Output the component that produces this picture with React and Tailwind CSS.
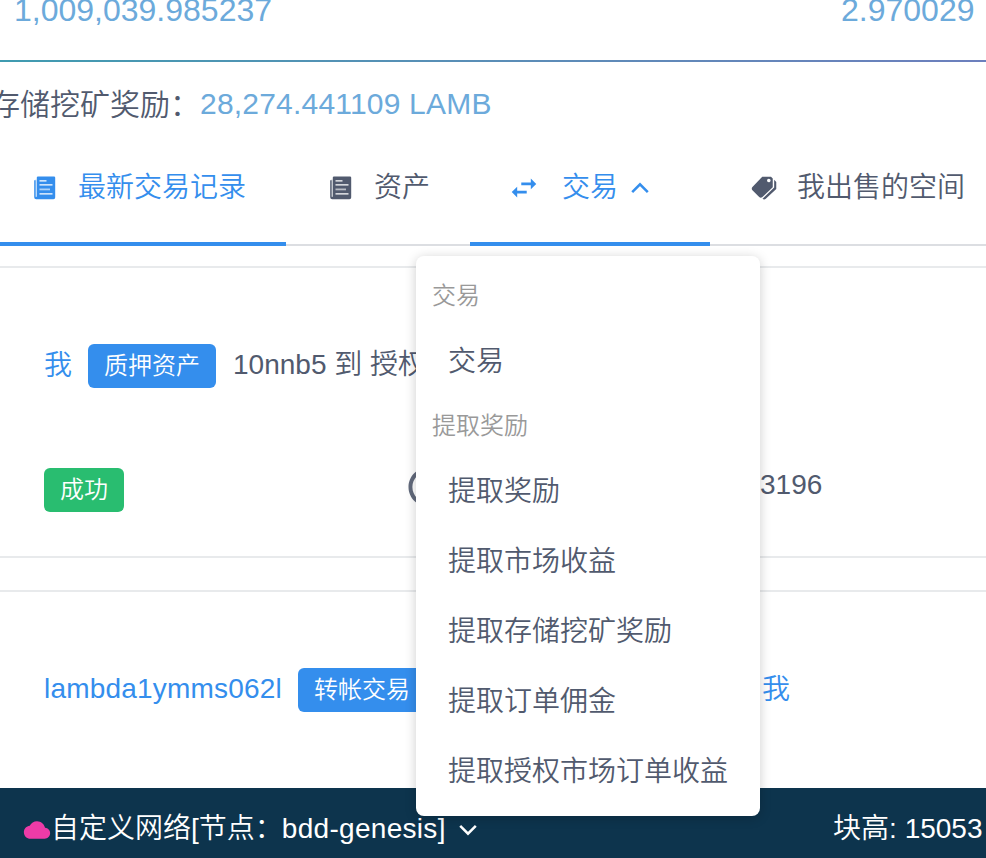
import React from 'react';
import { IoMdSwap, IoMdPricetags, IoMdCloud, IoMdTime } from 'react-icons/io';

function PaperIcon({ className }) {
  return (
    <svg viewBox="0 0 22 24" className={`h-6 w-[22px] ${className}`} fill="none">
      <path d="M0.2 4.2h1.4v16.6h1.2V1.6Q2.8 0.4 4 0.4h16Q21.2 0.4 21.2 1.6v19.8q0 1.8-1.8 1.8H2.2q-2 0-2-2z" fill="currentColor" />
      <path d="M1.9 3.6v17" stroke="currentColor" strokeOpacity="0.4" strokeWidth="1" />
      <path d="M5.5 4.9h7M5.5 8.9h13M5.5 17.9h13" stroke="white" strokeWidth="1.1" />
      <path d="M5.5 13.4h10.5" stroke="white" strokeOpacity="0.6" strokeWidth="1.8" />
    </svg>
  );
}

function Chevron({ className }) {
  return (
    <svg viewBox="0 0 18 12" className={`h-3 w-[18px] ${className}`} fill="none">
      <path d="M1.2 10.2L9 2.3l7.8 7.9" stroke="currentColor" strokeWidth="2.5" />
    </svg>
  );
}

function Tab({ icon, label, active, className, children }) {
  return (
    <div
      className={`flex h-[100px] shrink-0 items-center whitespace-nowrap ${
        active ? 'border-b-4 border-[#348eed] pb-[13px] text-[#348eed]' : 'border-b-2 border-[#dcdee2] pb-[15px]'
      } ${className}`}
    >
      {icon}
      <span className="pt-px leading-[40px]">{label}</span>
      {children}
    </div>
  );
}

function Badge({ color, children }) {
  return (
    <span className={`h-[44px] shrink-0 rounded-[6px] px-4 text-[24px] leading-[44px] text-white ${color}`}>
      {children}
    </span>
  );
}

function MenuTitle({ children }) {
  return <div className="h-[60px] px-4 text-[24px] leading-[60px] text-[#999999]">{children}</div>;
}

function MenuItem({ children }) {
  return <div className="h-[70px] px-8 leading-[72px]">{children}</div>;
}

function Dropdown() {
  return (
    <div className="absolute left-[416px] top-[256px] h-[560px] w-[344px] rounded-[8px] bg-white py-[10px] shadow-[0_2px_12px_rgba(0,0,0,0.2)]">
      <MenuTitle>交易</MenuTitle>
      <MenuItem>交易</MenuItem>
      <MenuTitle>提取奖励</MenuTitle>
      <MenuItem>提取奖励</MenuItem>
      <MenuItem>提取市场收益</MenuItem>
      <MenuItem>提取存储挖矿奖励</MenuItem>
      <MenuItem>提取订单佣金</MenuItem>
      <MenuItem>提取授权市场订单收益</MenuItem>
    </div>
  );
}

export default function App() {
  return (
    <div className="relative flex h-[858px] w-[986px] flex-col overflow-hidden whitespace-nowrap bg-white font-['Liberation_Sans','Noto_Sans_CJK_SC',sans-serif] text-[28px] font-[350] text-[#515a6e]">
      <div className="flex h-[60px] shrink-0 justify-between pl-[14px] pr-[11.5px] text-[32px] leading-[20px] text-[#6caadb]">
        <span>1,009,039.985237</span>
        <span>2.970029</span>
      </div>
      <div className="h-[2px] shrink-0 bg-linear-to-r from-[#3f9bb0] to-[#6c7fbd]" />

      <div className="-ml-[10px] flex h-[84px] shrink-0 items-center text-[30px] leading-[40px]">
        <span className="pt-px">存储挖矿奖励：</span>
        <span className="tracking-[0.2px] text-[#6caadb]">28,274.441109 LAMB</span>
      </div>

      <div className="flex shrink-0">
        <Tab active className="w-[286px] pl-[34px]" label="最新交易记录" icon={<PaperIcon className="mr-[22px]" />} />
        <Tab className="w-[184px] pl-[44px]" label="资产" icon={<PaperIcon className="mr-[22px]" />} />
        <Tab active className="w-[240px] pl-[40px]" label="交易" icon={<IoMdSwap className="mr-[24px] size-7" />}>
          <Chevron className="ml-[13px] mt-px" />
        </Tab>
        <Tab className="w-[276px] pl-[40px]" label="我出售的空间" icon={<IoMdPricetags className="mr-[19px] size-7" />} />
      </div>

      <div className="mt-[20px] flex h-[292px] shrink-0 flex-col border-y-2 border-[#e8eaec] pt-[76px]">
        <div className="flex h-[44px] items-center gap-4 pl-[44px]">
          <span className="pb-px leading-[40px] text-[#348eed]">我</span>
          <Badge color="bg-[#348eed]">质押资产</Badge>
          <span className="ml-px pb-[3px] leading-[40px]">10nnb5 到 授权</span>
        </div>
        <div className="mt-[80px] flex h-[44px] items-center pl-[44px]">
          <Badge color="bg-[#29bd70]">成功</Badge>
          <IoMdTime className="-mt-[6px] ml-[280px] size-12" />
          <span className="ml-[308px] pb-[11px] leading-[40px]">3196</span>
        </div>
      </div>

      <div className="mt-[32px] flex h-[198px] shrink-0 flex-col border-t-2 border-[#e8eaec] pt-[76px]">
        <div className="flex h-[44px] items-center gap-4 pl-[44px]">
          <span className="w-[238px] pb-[3px] leading-[40px] tracking-[0.2px] text-[#348eed]">lambda1ymms062l</span>
          <Badge color="bg-[#348eed]">转帐交易</Badge>
          <span className="ml-[320px] pb-px leading-[40px] text-[#348eed]">我</span>
        </div>
      </div>

      <div className="flex h-[70px] shrink-0 items-center bg-[#0d344d] pl-[23px] pt-[11px] leading-[40px] text-white">
        <IoMdCloud className="mt-[3px] size-7 text-[#ed3ba7]" />
        <span>自定义网络[节点：</span>
        <span className="-ml-px tracking-[0.3px]">bdd-genesis]</span>
        <Chevron className="ml-[13px] mt-[2px] rotate-180" />
        <span className="ml-auto pr-[3.5px]">块高: 15053</span>
      </div>

      <Dropdown />
    </div>
  );
}
